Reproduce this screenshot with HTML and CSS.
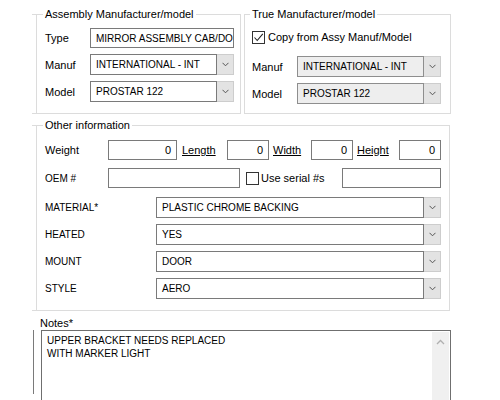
FILE: index.html
```html
<!DOCTYPE html>
<html>
<head>
<meta charset="utf-8">
<link rel="stylesheet" href="styles.css">
</head>
<body>
<div class="form">
  <div class="top">
    <fieldset class="group group-a">
      <legend>Assembly Manufacturer/model</legend>
      <div class="rows">
        <div class="row">
          <span class="lbl w45">Type</span>
          <div class="tb w144 caps">MIRROR ASSEMBLY CAB/DO</div>
        </div>
        <div class="row">
          <span class="lbl w45">Manuf</span>
          <div class="combo w144">
            <div class="val caps">INTERNATIONAL - INT</div>
            <div class="btn"><svg width="7" height="5" viewBox="0 0 7 5"><polyline points="0.5,0.8 3.5,3.8 6.5,0.8" fill="none" stroke="#555" stroke-width="1"/></svg></div>
          </div>
        </div>
        <div class="row">
          <span class="lbl w45">Model</span>
          <div class="combo w144">
            <div class="val caps">PROSTAR 122</div>
            <div class="btn"><svg width="7" height="5" viewBox="0 0 7 5"><polyline points="0.5,0.8 3.5,3.8 6.5,0.8" fill="none" stroke="#555" stroke-width="1"/></svg></div>
          </div>
        </div>
      </div>
    </fieldset>
    <fieldset class="group group-b">
      <legend>True Manufacturer/model</legend>
      <div class="chkrow">
        <span class="chk"><svg width="11" height="11" viewBox="0 0 11 11"><polyline points="1.5,5.5 4.2,8.5 9.8,1.8" fill="none" stroke="#222" stroke-width="1.1"/></svg></span>
        <span class="chktext">Copy from Assy Manuf/Model</span>
      </div>
      <div class="rows">
        <div class="row">
          <span class="lbl w45">Manuf</span>
          <div class="combo w144 disabled">
            <div class="val caps">INTERNATIONAL - INT</div>
            <div class="btn"><svg width="7" height="5" viewBox="0 0 7 5"><polyline points="0.5,0.8 3.5,3.8 6.5,0.8" fill="none" stroke="#555" stroke-width="1"/></svg></div>
          </div>
        </div>
        <div class="row">
          <span class="lbl w45">Model</span>
          <div class="combo w144 disabled">
            <div class="val caps">PROSTAR 122</div>
            <div class="btn"><svg width="7" height="5" viewBox="0 0 7 5"><polyline points="0.5,0.8 3.5,3.8 6.5,0.8" fill="none" stroke="#555" stroke-width="1"/></svg></div>
          </div>
        </div>
      </div>
    </fieldset>
  </div>

  <fieldset class="group group-c">
    <legend>Other information</legend>
    <div class="row r1">
      <span class="lbl w63">Weight</span>
      <div class="tb num w69">0</div>
      <span class="lnk w50">Length</span>
      <div class="tb num w42">0</div>
      <span class="lnk w42">Width</span>
      <div class="tb num w42">0</div>
      <span class="lnk w46">Height</span>
      <div class="tb num w42">0</div>
    </div>
    <div class="row r2">
      <span class="lbl w63 caps">OEM #</span>
      <div class="tb w132"></div>
      <div class="serial">
        <span class="chk"></span>
        <span class="serialtext">Use serial #s</span>
      </div>
      <div class="tb w99"></div>
    </div>
    <div class="row r3">
      <span class="lbl w111 caps">MATERIAL*</span>
      <div class="combo w285">
        <div class="val caps">PLASTIC CHROME BACKING</div>
        <div class="btn"><svg width="7" height="5" viewBox="0 0 7 5"><polyline points="0.5,0.8 3.5,3.8 6.5,0.8" fill="none" stroke="#555" stroke-width="1"/></svg></div>
      </div>
    </div>
    <div class="row r4">
      <span class="lbl w111 caps">HEATED</span>
      <div class="combo w285">
        <div class="val caps">YES</div>
        <div class="btn"><svg width="7" height="5" viewBox="0 0 7 5"><polyline points="0.5,0.8 3.5,3.8 6.5,0.8" fill="none" stroke="#555" stroke-width="1"/></svg></div>
      </div>
    </div>
    <div class="row r4">
      <span class="lbl w111 caps">MOUNT</span>
      <div class="combo w285">
        <div class="val caps">DOOR</div>
        <div class="btn"><svg width="7" height="5" viewBox="0 0 7 5"><polyline points="0.5,0.8 3.5,3.8 6.5,0.8" fill="none" stroke="#555" stroke-width="1"/></svg></div>
      </div>
    </div>
    <div class="row r4">
      <span class="lbl w111 caps">STYLE</span>
      <div class="combo w285">
        <div class="val caps">AERO</div>
        <div class="btn"><svg width="7" height="5" viewBox="0 0 7 5"><polyline points="0.5,0.8 3.5,3.8 6.5,0.8" fill="none" stroke="#555" stroke-width="1"/></svg></div>
      </div>
    </div>
  </fieldset>

  <div class="notes-label">Notes*</div>
  <div class="notes-row">
    <div class="notes-line"></div>
    <div class="notes-box">
      <div class="notes-text caps">UPPER BRACKET NEEDS REPLACED<br>WITH MARKER LIGHT</div>
      <div class="vscroll"><svg width="9" height="6" viewBox="0 0 9 6"><polyline points="1,5 4.5,1.5 8,5" fill="none" stroke="#b0b0b0" stroke-width="1.3"/></svg></div>
    </div>
  </div>
</div>
</body>
</html>
```

FILE: styles.css
```css
* { box-sizing: border-box; }

body {
  margin: 0;
  background: #ffffff;
  font-family: "Liberation Sans", Arial, sans-serif;
  font-size: 11px;
  color: #000;
}

.form {
  width: 500px;
  height: 400px;
  padding-top: 8px;
  overflow: hidden;
}

.top {
  display: flex;
  align-items: stretch;
}

.group {
  margin: 0;
  border: 1px solid #dcdcdc;
  min-width: 0;
}

.group legend {
  padding: 0 2px;
  margin-left: -2px;
  line-height: 13px;
  font-size: 11px;
}

.group-a {
  margin-left: 32px;
  width: 209px;
  border-left: none;
  background: linear-gradient(#dcdcdc, #dcdcdc) 4px 0 / 1px 100% no-repeat;
  padding: 7px 6px 10px 13px;
}

.group-b {
  margin-left: 3px;
  width: 207px;
  padding: 9px 9px 9px 7px;
}

.group-c {
  margin: 5px 0 0 32px;
  width: 418px;
  border-left: none;
  background: linear-gradient(#dcdcdc, #dcdcdc) 4px 0 / 1px 100% no-repeat;
  padding: 8px 8px 11px 13px;
}

.rows {
  display: flex;
  flex-direction: column;
  gap: 6px;
}

.row {
  display: flex;
  align-items: center;
}

.r2 { margin-top: 8px; }
.r3 { margin-top: 9px; }
.r4 { margin-top: 6px; }

.lbl { flex: none; }
.w45 { width: 45px; }
.w63 { width: 63px; }
.w111 { width: 111px; }
.w144 { width: 144px; }
.w69 { width: 69px; }
.w42 { width: 42px; }
.w46 { width: 46px; }
.w50 { width: 50px; }
.w132 { width: 132px; }
.w99 { width: 99px; }
.w285 { width: 285px; }

.caps { font-size: 10px; }

.tb {
  flex: none;
  height: 20px;
  border: 1px solid #7a7a7a;
  background: #fff;
  padding: 0 5px;
  display: flex;
  align-items: center;
  white-space: nowrap;
  overflow: hidden;
}

.num {
  justify-content: flex-end;
  font-size: 11px;
}

.lnk {
  flex: none;
  padding-left: 4px;
  text-decoration: underline;
}

.lnk.w50 { padding-left: 5px; }

.combo {
  flex: none;
  display: flex;
  height: 21px;
}

.combo .val {
  flex: 1;
  border: 1px solid #7a7a7a;
  background: #fff;
  padding-left: 5px;
  display: flex;
  align-items: center;
  white-space: nowrap;
  overflow: hidden;
}

.combo .btn {
  width: 17px;
  flex: none;
  background: #e3e3e3;
  border: 1px solid #cdcdcd;
  border-left: none;
  display: flex;
  align-items: center;
  justify-content: center;
}

.combo.disabled .val {
  background: #eeeeee;
  border-color: #8e8e8e;
}

.chkrow {
  display: flex;
  align-items: center;
  height: 14px;
  margin-bottom: 12px;
}

.chk {
  flex: none;
  width: 13px;
  height: 13px;
  border: 1px solid #333;
  background: #fff;
  display: flex;
  align-items: center;
  justify-content: center;
}

.chktext { margin-left: 3px; }

.serial {
  flex: 1;
  margin-left: 6px;
  display: flex;
  align-items: center;
}

.serialtext { margin-left: 2px; }

.notes-label {
  margin: 6px 0 0 40px;
  line-height: 13px;
}

.notes-row {
  display: flex;
  margin-left: 33px;
}

.notes-line {
  width: 1px;
  height: 64px;
  background: #7a7a7a;
  flex: none;
}

.notes-box {
  margin-left: 7px;
  width: 410px;
  height: 100px;
  flex: none;
  border: 1px solid #6f6f6f;
  display: flex;
}

.notes-text {
  flex: 1;
  padding: 3px 5px;
  line-height: 13px;
}

.vscroll {
  width: 17px;
  margin: 1px 1px 0 0;
  background: #f0f0f0;
  display: flex;
  justify-content: center;
  align-items: flex-start;
  padding-top: 7px;
}
```
